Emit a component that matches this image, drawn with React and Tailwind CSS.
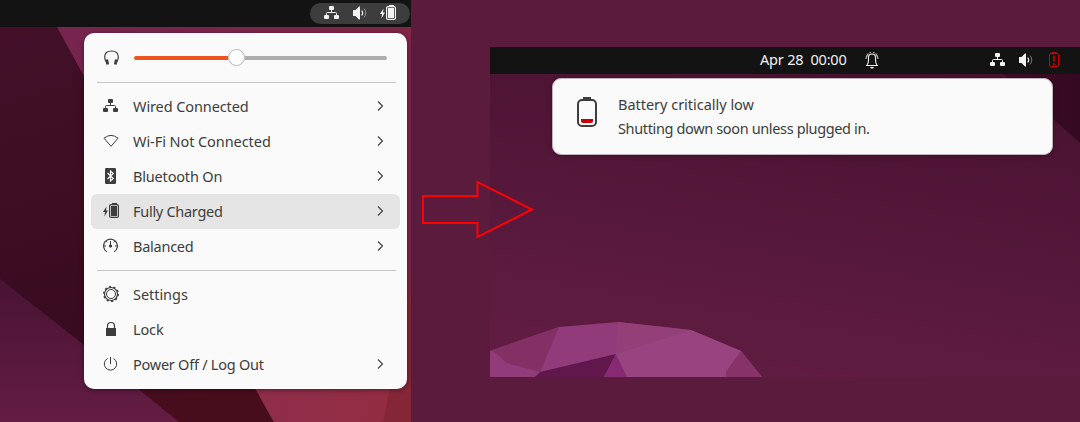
import React from "react";

function NetworkIcon() {
  return (
    <svg width="16" height="16" viewBox="0 0 16 16" fill="currentColor">
      <rect x="5" y="1" width="5" height="4" rx="1" />
      <rect x="0" y="10" width="5" height="4" rx="1" />
      <rect x="10" y="10" width="5" height="4" rx="1" />
      <path d="M7.5 4.5V7.5M2.500 10.500V8.500Q2.500 7.500 3.500 7.500H11.500Q12.500 7.500 12.500 8.500V10.500" fill="none" stroke="currentColor" />
    </svg>
  );
}

function VolumeIcon() {
  return (
    <svg width="16" height="16" viewBox="0 0 16 16" fill="currentColor">
      <path d="M1 5H3.500L7 1.500H8V14.500H7L3.500 11H1Z" />
      <path d="M9.700 5.500Q11.700 8 9.700 10.500" fill="none" stroke="currentColor" strokeWidth="1.200" />
      <path d="M12 3.500Q15.600 8 12 12.500" fill="none" stroke="currentColor" opacity="0.450" />
    </svg>
  );
}

function ChargedIcon() {
  return (
    <svg width="18" height="16" viewBox="0 0 18 16" fill="currentColor">
      <path d="M3.500 3.500L0 9H2L1.400 13.500L5 7.500H3Z" />
      <rect x="9" y="0" width="5" height="2" />
      <rect x="6.600" y="1.600" width="8.800" height="12.800" rx="1.500" fill="none" stroke="currentColor" strokeWidth="1.200" />
      <rect x="8" y="3" width="6" height="10" />
    </svg>
  );
}

function HeadphonesIcon() {
  return (
    <svg width="16" height="16" viewBox="0 0 16 16" fill="none" stroke="currentColor">
      <path d="M2.500 12Q0.700 10 0.700 7Q0.700 1 7.500 1T14.300 7Q14.300 10 12.500 12" strokeWidth="1.200" />
      <path d="M2.700 9.500L3.700 14.500M12.300 9.500L11.300 14.500" strokeWidth="2.800" />
    </svg>
  );
}

function WifiIcon() {
  return (
    <svg width="16" height="16" viewBox="0 0 16 16" fill="none" stroke="currentColor">
      <path d="M1 5.200Q8 -0.400 15 5.200L8 13.300Z" strokeWidth="1" />
    </svg>
  );
}

function BluetoothIcon() {
  return (
    <svg width="16" height="16" viewBox="0 0 16 16">
      <rect x="2" y="0" width="11" height="16" rx="1.200" fill="currentColor" />
      <path d="M4.500 5L10.300 10.500L7.500 13V3L10.300 5.500L4.500 11" fill="none" stroke="#fafafa" strokeWidth="1.200" />
    </svg>
  );
}

function GaugeIcon() {
  return (
    <svg width="16" height="16" viewBox="0 0 16 16" fill="none" stroke="currentColor">
      <path d="M3.800 13.800A6.900 6.900 0 1 1 11.200 13.800" strokeWidth="1.200" />
      <path d="M7.500 3V8M1 8H3M12 8H14M3.200 3.200L4.300 4.300M11.800 3.200L10.700 4.300" />
      <circle cx="7.500" cy="8" r="1.200" fill="currentColor" />
    </svg>
  );
}

function GearIcon() {
  return (
    <svg width="16" height="16" viewBox="0 0 16 16" fill="none" stroke="currentColor">
      <circle cx="8" cy="8" r="6.500" strokeWidth="1.200" />
      <circle cx="8" cy="8" r="7.300" strokeWidth="1.400" strokeDasharray="2.200 2.387" />
      <circle cx="8" cy="8" r="4.500" />
    </svg>
  );
}

function LockIcon() {
  return (
    <svg width="16" height="16" viewBox="0 0 16 16" fill="none" stroke="currentColor">
      <path d="M4.500 7V5Q4.500 1.500 8 1.500T11.500 5V7" strokeWidth="1.200" />
      <rect x="3" y="7" width="10" height="8" fill="currentColor" stroke="none" />
    </svg>
  );
}

function PowerIcon() {
  return (
    <svg width="16" height="16" viewBox="0 0 16 16" fill="none" stroke="currentColor">
      <path d="M4.500 2.500A6.200 6.200 0 1 0 10.500 2.500M7.500 1V8" />
    </svg>
  );
}

function BellIcon() {
  return (
    <svg width="16" height="18" viewBox="0 0 16 18" fill="none" stroke="currentColor" strokeWidth="1.100">
      <path d="M2 14.500H14M3 14Q4.500 12 4.500 9V6.500Q4.500 3 8 3T11.500 6.500V9Q11.500 12 13 14" />
      <path d="M2 8Q2 5 4.500 2.500M14 8Q14 5 11.500 2.500M5.500 1.500H7M9 1.500H10.500" opacity="0.750" />
      <path d="M6 16H10L9 17.500H7Z" fill="currentColor" stroke="none" />
    </svg>
  );
}

function Chevron() {
  return (
    <svg className="mb-px ml-auto shrink-0" width="8" height="12" viewBox="0 0 8 12" fill="none" stroke="#3d3d3d" strokeWidth="1.100">
      <path d="M1 1.500L5.500 6L1 10.500" />
    </svg>
  );
}

function MenuItem({ icon, label, tracking, arrow, active }) {
  return (
    <div className={"mx-[7px] flex h-[35px] shrink-0 items-center rounded-[6px] pl-[12px] pr-[15px] " + (active ? "bg-[#e5e5e5]" : "")}>
      <span className="flex w-[30px] shrink-0 pb-px">{icon}</span>
      <span className={"mb-px whitespace-pre text-[14.5px] leading-5 " + tracking}>{label}</span>
      {arrow && <Chevron />}
    </div>
  );
}

function LeftWallpaper() {
  return (
    <svg className="absolute inset-0" width="411" height="422" viewBox="0 0 411 422">
      <defs>
        <linearGradient id="lg1" x1="0" y1="0" x2="0.300" y2="1">
          <stop stopColor="#431029" /><stop offset="0.500" stopColor="#3d0d22" /><stop offset="0.800" stopColor="#380b20" /><stop offset="1" stopColor="#480d1d" />
        </linearGradient>
        <linearGradient id="lg2" x1="0" y1="0" x2="0" y2="1">
          <stop stopColor="#481334" /><stop offset="1" stopColor="#641c42" />
        </linearGradient>
        <linearGradient id="lg3" x1="0" y1="0" x2="1" y2="0">
          <stop stopColor="#76254f" /><stop offset="1" stopColor="#7f2646" />
        </linearGradient>
        <linearGradient id="lg4" x1="0" y1="0" x2="1" y2="0">
          <stop stopColor="#8e2d4b" /><stop offset="1" stopColor="#942c40" />
        </linearGradient>
      </defs>
      <rect width="411" height="422" fill="url(#lg1)" />
      <path d="M57 27H411V422H274L255 388Z" fill="url(#lg3)" />
      <path d="M0 279L84 345L137 388L179 422H0Z" fill="url(#lg2)" />
      <path d="M255 388L274 422H383L411 310V300H255Z" fill="url(#lg4)" />
      <path d="M411 285L383 422H411Z" fill="#852638" />
    </svg>
  );
}

function RightWallpaper() {
  return (
    <svg className="absolute inset-0" width="590" height="330" viewBox="0 0 590 330">
      <defs>
        <linearGradient id="rg1" x1="0.650" y1="0" x2="0.350" y2="1">
          <stop stopColor="#48112f" /><stop offset="0.550" stopColor="#55183a" /><stop offset="1" stopColor="#611c42" />
        </linearGradient>
        <linearGradient id="rg2" x1="0" y1="0" x2="1" y2="0">
          <stop stopColor="#3c0c27" /><stop offset="1" stopColor="#350921" />
        </linearGradient>
      </defs>
      <rect width="590" height="330" fill="url(#rg1)" />
      <path d="M513 27H590V96Z" fill="url(#rg2)" />
      <path d="M0 304L69 280L128 275L201 283L251 304L272 330H0Z" fill="#923b7b" />
      <path d="M2 303L69 280L50 325L17 316Z" fill="#833064" />
      <path d="M45 330L50 325L126 307L114 330Z" fill="#60174b" />
      <path d="M126 307L137 330H114Z" fill="#872a73" />
      <path d="M128 275L201 283L126 307Z" fill="#934079" />
      <path d="M126 307L201 283L251 304L236 325V330H137Z" fill="#984480" />
      <path d="M251 304L272 330H236V325Z" fill="#87336a" />
    </svg>
  );
}

function LowBatteryIcon() {
  return (
    <svg className="mt-[18px] shrink-0" width="20" height="31" viewBox="0 0 20 31" fill="none">
      <rect x="6" y="0" width="8" height="3" fill="#3d3d3d" />
      <rect x="1" y="3" width="18" height="26" rx="4" stroke="#3d3d3d" strokeWidth="2" />
      <path d="M4 22H16V24Q16 26 14 26H6Q4 26 4 24Z" fill="#c00" />
    </svg>
  );
}

export default function App() {
  return (
    <div className="relative flex h-[422px] w-[1080px] overflow-hidden bg-[#5a1b3c] font-['Noto_Sans',sans-serif] text-[#3d3d3d]">
      <section className="relative h-[422px] w-[411px] shrink-0">
        <LeftWallpaper />
        <div className="relative flex h-[27px] items-center justify-end bg-[#131313] pr-px text-[#f2f2f2]">
          <div className="flex h-[21px] w-[100px] items-start rounded-full bg-[#3d3d3d] pl-[14px] pt-[2px]">
            <NetworkIcon />
            <span className="ml-[12px]"><VolumeIcon /></span>
            <span className="ml-[12px]"><ChargedIcon /></span>
          </div>
        </div>
        <div className="relative ml-[84px] mt-[6px] flex h-[356px] w-[323px] flex-col rounded-[10px] bg-[#fafafa] shadow-[0_1px_5px_#0006]">
          <div className="flex h-[49px] shrink-0 items-center pl-[20px]">
            <HeadphonesIcon />
            <div className="ml-[14px] flex w-[253px] items-center">
              <div className="h-1 w-[94px] rounded-l-full bg-[#ea5420]" />
              <div className="size-[17px] shrink-0 rounded-full border border-[#b5b5b5] bg-white" />
              <div className="h-1 flex-1 rounded-r-full bg-[#adadad]" />
            </div>
          </div>
          <div className="mb-[6px] ml-[13px] h-px w-[299px] shrink-0 bg-[#c5c5c5]" />
          <MenuItem icon={<NetworkIcon />} label="Wired Connected" tracking="tracking-[-0.1px]" arrow />
          <MenuItem icon={<WifiIcon />} label="Wi-Fi Not Connected" tracking="tracking-[-0.07px]" arrow />
          <MenuItem icon={<BluetoothIcon />} label="Bluetooth On" tracking="tracking-[-0.18px]" arrow />
          <MenuItem icon={<ChargedIcon />} label="Fully Charged" tracking="tracking-[-0.28px]" arrow active />
          <MenuItem icon={<GaugeIcon />} label="Balanced" tracking="tracking-[-0.25px]" arrow />
          <div className="mb-[6px] ml-[13px] mt-[6px] h-px w-[299px] shrink-0 bg-[#c5c5c5]" />
          <MenuItem icon={<GearIcon />} label="Settings" tracking="tracking-[-0.05px]" />
          <MenuItem icon={<LockIcon />} label="Lock" tracking="tracking-[-0.15px]" />
          <MenuItem icon={<PowerIcon />} label="Power Off / Log Out" tracking="tracking-[-0.25px]" arrow />
        </div>
      </section>
      <section className="relative ml-[79px] mt-[47px] h-[330px] w-[590px] shrink-0">
        <RightWallpaper />
        <div className="relative flex h-[27px] items-start bg-[#131313] pl-[270px] pt-[5px] text-[#f2f2f2]">
          <span className="-mt-[3px] w-[104px] whitespace-pre text-[14.5px] leading-5 tracking-[-0.2px]">Apr 28  00:00</span>
          <span className="-mt-px"><BellIcon /></span>
          <span className="ml-[110px]"><NetworkIcon /></span>
          <span className="ml-[12px]"><VolumeIcon /></span>
          <svg className="ml-[14px]" width="12" height="16" viewBox="0 0 12 16" fill="none" stroke="#d40000">
            <path d="M3.500 0.750H8.500" strokeWidth="1.500" />
            <rect x="1.500" y="1.500" width="9" height="13" rx="1.500" />
            <path d="M6 3.500V9.500M6 11V13" strokeWidth="1.600" />
          </svg>
        </div>
        <div className="relative ml-[62px] mt-[4px] flex h-[77px] w-[501px] rounded-[9px] border border-[#c0b3ba] bg-[#fafafa] pl-[24px] shadow-[0_1px_4px_#0004]">
          <LowBatteryIcon />
          <div className="ml-[21px] mt-[13px] text-[14.5px] leading-6">
            <p className="tracking-[-0.02px]">Battery critically low</p>
            <p className="tracking-[-0.36px]">Shutting down soon unless plugged in.</p>
          </div>
        </div>
      </section>
      <svg className="absolute left-[420px] top-[178px]" width="116" height="62" viewBox="0 0 116 62" fill="none" stroke="#f00" strokeWidth="2">
        <path d="M3 18H57.500V4L112 31.500L57.500 59V45H3Z" />
      </svg>
    </div>
  );
}
